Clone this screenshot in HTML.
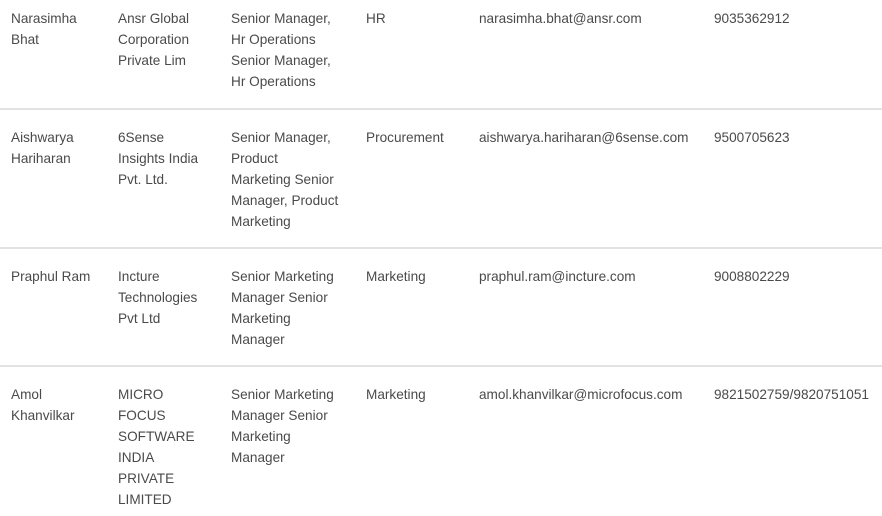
<!DOCTYPE html>
<html><head><style>
body{margin:0;width:882px;height:516px;background:#fff;overflow:hidden;font-family:"Liberation Sans",sans-serif;font-size:13.6px;color:#4a4a4a;position:relative}
.c{position:absolute;line-height:21px;white-space:nowrap}
.l{position:absolute;left:0;width:882px;height:2px;background:#e2e2e2}
</style></head><body>
<div class="c" style="left:11px;top:8px">Narasimha<br>Bhat</div>
<div class="c" style="left:118px;top:8px">Ansr Global<br>Corporation<br>Private Lim</div>
<div class="c" style="left:231px;top:8px">Senior Manager,<br>Hr Operations<br>Senior Manager,<br>Hr Operations</div>
<div class="c" style="left:366px;top:8px">HR</div>
<div class="c" style="left:479px;top:8px">narasimha.bhat@ansr.com</div>
<div class="c" style="left:714px;top:8px">9035362912</div>
<div class="l" style="top:108px"></div>
<div class="c" style="left:11px;top:127px">Aishwarya<br>Hariharan</div>
<div class="c" style="left:118px;top:127px">6Sense<br>Insights India<br>Pvt. Ltd.</div>
<div class="c" style="left:231px;top:127px">Senior Manager,<br>Product<br>Marketing Senior<br>Manager, Product<br>Marketing</div>
<div class="c" style="left:366px;top:127px">Procurement</div>
<div class="c" style="left:479px;top:127px">aishwarya.hariharan@6sense.com</div>
<div class="c" style="left:714px;top:127px">9500705623</div>
<div class="l" style="top:247px"></div>
<div class="c" style="left:11px;top:266px">Praphul Ram</div>
<div class="c" style="left:118px;top:266px">Incture<br>Technologies<br>Pvt Ltd</div>
<div class="c" style="left:231px;top:266px">Senior Marketing<br>Manager Senior<br>Marketing<br>Manager</div>
<div class="c" style="left:366px;top:266px">Marketing</div>
<div class="c" style="left:479px;top:266px">praphul.ram@incture.com</div>
<div class="c" style="left:714px;top:266px">9008802229</div>
<div class="l" style="top:365px"></div>
<div class="c" style="left:11px;top:384px">Amol<br>Khanvilkar</div>
<div class="c" style="left:118px;top:384px">MICRO<br>FOCUS<br>SOFTWARE<br>INDIA<br>PRIVATE<br>LIMITED</div>
<div class="c" style="left:231px;top:384px">Senior Marketing<br>Manager Senior<br>Marketing<br>Manager</div>
<div class="c" style="left:366px;top:384px">Marketing</div>
<div class="c" style="left:479px;top:384px">amol.khanvilkar@microfocus.com</div>
<div class="c" style="left:714px;top:384px">9821502759/9820751051</div>
</body></html>
